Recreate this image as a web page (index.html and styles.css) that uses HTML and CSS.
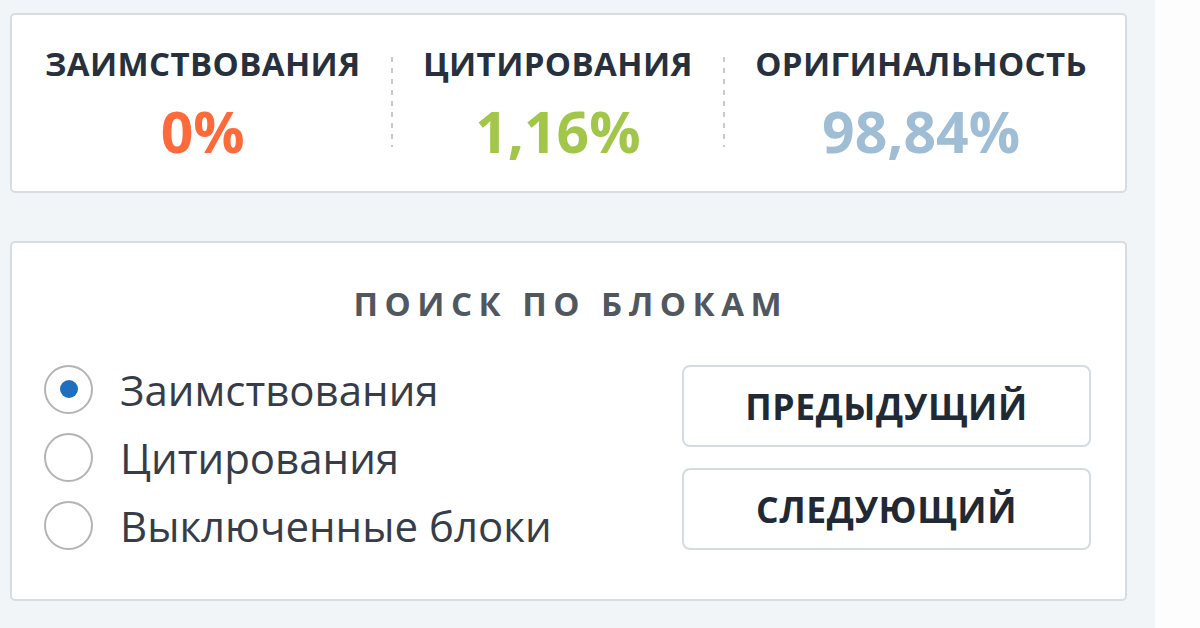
FILE: index.html
```html
<!DOCTYPE html>
<html lang="ru">
<head>
    <meta charset="UTF-8">
    <meta name="viewport" content="width=device-width, initial-scale=1.0">
    <title>Результаты проверки</title>
    <link rel="stylesheet" href="styles.css">
</head>
<body>
    <div class="panel">
        <!-- Summary -->
        <section class="card summary">
            <div class="stat">
                <div class="stat-label">Заимствования</div>
                <div class="stat-value borrow">0%</div>
            </div>
            <div class="divider"></div>
            <div class="stat">
                <div class="stat-label">Цитирования</div>
                <div class="stat-value quote">1,16%</div>
            </div>
            <div class="divider"></div>
            <div class="stat">
                <div class="stat-label">Оригинальность</div>
                <div class="stat-value original">98,84%</div>
            </div>
        </section>

        <!-- Block search -->
        <section class="card search">
            <h2>Поиск по блокам</h2>
            <div class="search-body">
                <div class="options">
                    <label class="option">
                        <span class="radio checked"><span class="dot"></span></span>
                        Заимствования
                    </label>
                    <label class="option">
                        <span class="radio"></span>
                        Цитирования
                    </label>
                    <label class="option">
                        <span class="radio"></span>
                        Выключенные блоки
                    </label>
                </div>
                <div class="nav-buttons">
                    <button type="button">Предыдущий</button>
                    <button type="button">Следующий</button>
                </div>
            </div>
        </section>
    </div>
</body>
</html>
```

FILE: styles.css
```css
* {
    box-sizing: border-box;
    margin: 0;
    padding: 0;
}

body {
    font-family: "Open Sans", "Noto Sans", sans-serif;
    background: #fdfdfe;
    width: 1200px;
    height: 628px;
    overflow: hidden;
}

.panel {
    width: 1155px;
    height: 628px;
    background: #f2f5f8;
    padding: 13px 28px 0 10px;
}

.card {
    background: #fff;
    border: 2px solid #d6dce2;
    border-radius: 5px;
}

/* Summary */
.summary {
    height: 180px;
    display: flex;
    justify-content: space-between;
    align-items: flex-start;
    padding: 29px 38px 0 33px;
}

.stat {
    text-align: center;
}

.stat-label {
    font-size: 33px;
    font-weight: 700;
    line-height: 40px;
    letter-spacing: 0.4px;
    text-transform: uppercase;
    color: #27303d;
}

.stat-value {
    font-size: 57px;
    font-weight: 700;
    line-height: 60px;
    margin-top: 17px;
}

.borrow { color: #ff6a3b; }
.quote { color: #a2c64a; }
.original { color: #9fbdd5; }

.divider {
    width: 2px;
    height: 90px;
    margin-top: 13px;
    background: repeating-linear-gradient(to bottom, #c9c9c9 0 5px, transparent 5px 11px);
}

/* Block search */
.search {
    margin-top: 48px;
    height: 360px;
    padding: 41px 34px 0 32px;
}

.search h2 {
    font-size: 33px;
    font-weight: 700;
    line-height: 40px;
    letter-spacing: 6.5px;
    padding-left: 6.5px;
    text-align: center;
    text-transform: uppercase;
    color: #51575f;
}

.search-body {
    display: flex;
    justify-content: space-between;
    align-items: flex-start;
    margin-top: 31px;
}

.option {
    display: flex;
    align-items: center;
    gap: 27px;
    height: 68px;
    font-size: 42px;
    color: #363d48;
}

.radio {
    width: 49px;
    height: 49px;
    border: 2px solid #b4b4b4;
    border-radius: 50%;
    display: flex;
    align-items: center;
    justify-content: center;
}

.dot {
    width: 18px;
    height: 18px;
    border-radius: 50%;
    background: #1f6fc0;
}

.nav-buttons {
    display: flex;
    flex-direction: column;
    gap: 21px;
    margin-top: 10px;
}

button {
    width: 409px;
    height: 82px;
    background: #fff;
    border: 2px solid #d4dbe3;
    border-radius: 8px;
    font-family: inherit;
    font-size: 35.5px;
    font-weight: 700;
    letter-spacing: 0.6px;
    text-transform: uppercase;
    color: #212935;
    cursor: pointer;
}
```
